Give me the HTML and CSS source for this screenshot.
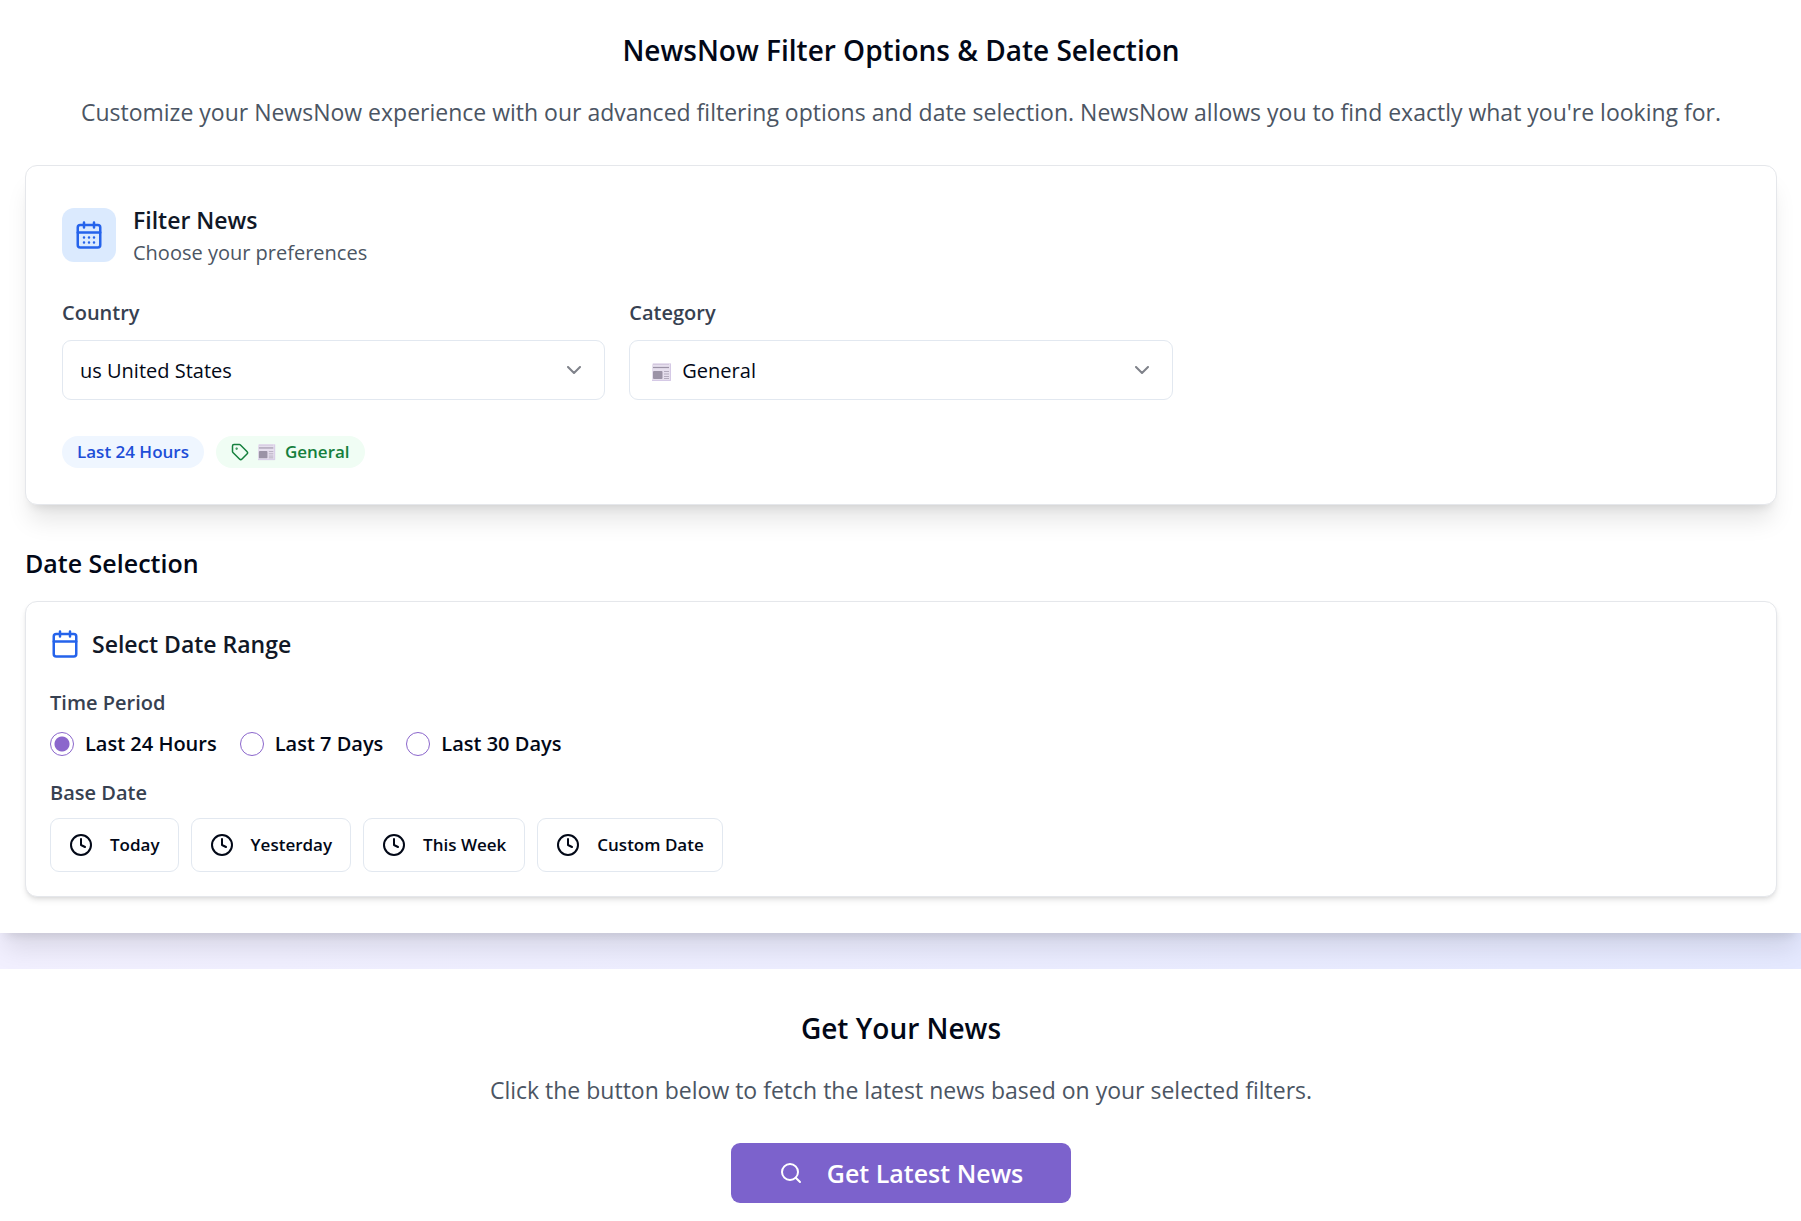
FILE: index.html
```html
<!DOCTYPE html>
<html lang="en">
<head>
    <meta charset="UTF-8">
    <meta name="viewport" content="width=device-width, initial-scale=1.0">
    <title>NewsNow</title>
    <link rel="stylesheet" href="styles.css">
</head>
<body>
    <!-- Shared icons -->
    <svg class="sprite" aria-hidden="true">
        <symbol id="newspaper" viewBox="0 0 20 20">
            <path d="M1 1h18v18H0V3z" fill="#e6dfee"/>
            <path d="M0 18.5h18.500V2" fill="none" stroke="#d5c9e6" stroke-width="1"/>
            <path d="M1 2.500h16" stroke="#d3c8de" stroke-width="1"/>
            <path d="M1 5.500h16" stroke="#9b93a6" stroke-width="1.2"/>
            <rect x="1" y="9" width="9.5" height="8" rx="1" fill="#9b93a6"/>
            <path d="M12 9.500h5M12 12h5M12 14.500h5M12 16.500h5" stroke="#b3abbd" stroke-width="1"/>
        </symbol>
        <symbol id="chevron" viewBox="0 0 24 24">
            <path d="m6 9 6 6 6-6"/>
        </symbol>
        <symbol id="clock" viewBox="0 0 24 24">
            <circle cx="12" cy="12" r="10"/>
            <path d="M12 6v6l4 2"/>
        </symbol>
    </svg>

    <main>
        <section class="panel panel-raised">
            <h2 class="panel-title">NewsNow Filter Options &amp; Date Selection</h2>
            <p class="panel-text">Customize your NewsNow experience with our advanced filtering options and date selection. NewsNow allows you to find exactly what you're looking for.</p>

            <div class="card filter-card">
                <div class="filter-header">
                    <div class="icon-box">
                        <svg class="icon icon-lg" viewBox="0 0 24 24">
                            <path d="M8 2v4M16 2v4M3 10h18"/>
                            <rect x="3" y="4" width="18" height="18" rx="2"/>
                            <path d="M8 14h.01M12 14h.01M16 14h.01M8 18h.01M12 18h.01M16 18h.01"/>
                        </svg>
                    </div>
                    <div>
                        <h3 class="card-title">Filter News</h3>
                        <p class="card-subtitle">Choose your preferences</p>
                    </div>
                </div>

                <div class="filter-grid">
                    <div class="field">
                        <label class="field-label" for="country">Country</label>
                        <div class="select-wrap">
                            <select id="country" class="select">
                                <option>us United States</option>
                            </select>
                            <svg class="icon select-chevron"><use href="#chevron"/></svg>
                        </div>
                    </div>
                    <div class="field">
                        <label class="field-label" for="category">Category</label>
                        <div class="select-wrap">
                            <select id="category" class="select select-with-icon">
                                <option>General</option>
                            </select>
                            <svg class="select-icon"><use href="#newspaper"/></svg>
                            <svg class="icon select-chevron"><use href="#chevron"/></svg>
                        </div>
                    </div>
                </div>

                <div class="chips">
                    <span class="chip chip-blue">Last 24 Hours</span>
                    <span class="chip chip-green">
                        <svg class="icon icon-sm" viewBox="0 0 24 24">
                            <path d="M12.586 2.586A2 2 0 0 0 11.172 2H4a2 2 0 0 0-2 2v7.172a2 2 0 0 0 .586 1.414l8.704 8.704a2.426 2.426 0 0 0 3.42 0l6.58-6.58a2.426 2.426 0 0 0 0-3.42z"/>
                            <circle cx="7.5" cy="7.5" r=".5" fill="currentColor"/>
                        </svg>
                        <svg class="icon-sm"><use href="#newspaper"/></svg>
                        General
                    </span>
                </div>
            </div>

            <h3 class="section-title">Date Selection</h3>

            <div class="card date-card">
                <div class="date-header">
                    <svg class="icon icon-lg" viewBox="0 0 24 24">
                        <path d="M8 2v4M16 2v4M3 10h18"/>
                        <rect x="3" y="4" width="18" height="18" rx="2"/>
                    </svg>
                    <h4 class="card-title">Select Date Range</h4>
                </div>

                <fieldset class="group">
                    <legend class="field-label">Time Period</legend>
                    <div class="radios">
                        <label class="radio"><input type="radio" name="period" checked>Last 24 Hours</label>
                        <label class="radio"><input type="radio" name="period">Last 7 Days</label>
                        <label class="radio"><input type="radio" name="period">Last 30 Days</label>
                    </div>
                </fieldset>

                <fieldset class="group">
                    <legend class="field-label">Base Date</legend>
                    <div class="date-buttons">
                        <button type="button" class="date-btn"><svg class="icon icon-md"><use href="#clock"/></svg>Today</button>
                        <button type="button" class="date-btn"><svg class="icon icon-md"><use href="#clock"/></svg>Yesterday</button>
                        <button type="button" class="date-btn"><svg class="icon icon-md"><use href="#clock"/></svg>This Week</button>
                        <button type="button" class="date-btn"><svg class="icon icon-md"><use href="#clock"/></svg>Custom Date</button>
                    </div>
                </fieldset>
            </div>
        </section>

        <section class="panel panel-fetch">
            <h2 class="panel-title">Get Your News</h2>
            <p class="panel-text">Click the button below to fetch the latest news based on your selected filters.</p>
            <button type="button" class="fetch-btn">
                <svg class="icon icon-md" viewBox="0 0 24 24">
                    <circle cx="11" cy="11" r="8"/>
                    <path d="m21 21-4.3-4.3"/>
                </svg>
                Get Latest News
            </button>
        </section>
    </main>
</body>
</html>
```
FILE: styles.css
```css
* {
    margin: 0;
    padding: 0;
    box-sizing: border-box;
}

body {
    font-family: "Segoe UI", "Open Sans", "Noto Sans", sans-serif;
    font-size: 20px;
    line-height: 30px;
    color: #020817;
    background: linear-gradient(to right, #f2f0ff, #e5e9ff);
}

button,
select {
    font: inherit;
    color: inherit;
}

main {
    display: flex;
    flex-direction: column;
    gap: 36px;
}

/* Icons */
.sprite {
    display: none;
}

.icon {
    fill: none;
    stroke: currentColor;
    stroke-width: 2;
    stroke-linecap: round;
    stroke-linejoin: round;
}

.icon-sm,
.icon-md,
.icon-lg {
    flex-shrink: 0;
}

.icon-sm {
    width: 18px;
    height: 18px;
}

.icon-md {
    width: 24px;
    height: 24px;
}

.icon-lg {
    width: 30px;
    height: 30px;
}

/* Panels */
.panel {
    background: #fff;
    padding: 30px 24px 36px 25px;
}

.panel-raised {
    box-shadow: 0 20px 25px -5px rgba(0, 0, 0, 0.1), 0 8px 10px -6px rgba(0, 0, 0, 0.1);
}

.panel-fetch {
    padding-top: 39px;
}

.panel-title {
    font-size: 28px;
    font-weight: 600;
    line-height: 40px;
    text-align: center;
    margin-bottom: 24px;
}

.panel-text {
    font-size: 23px;
    line-height: 36px;
    color: #4b5563;
    text-align: center;
    margin-bottom: 35px;
}

.section-title {
    font-size: 25px;
    font-weight: 600;
    line-height: 36px;
    margin: 40px 0 20px;
}

/* Cards */
.card {
    background: #fff;
    border: 1px solid #e5e7eb;
    border-radius: 12px;
}

.filter-card {
    padding: 36px;
    box-shadow: 0 20px 25px -5px rgba(0, 0, 0, 0.1), 0 8px 10px -6px rgba(0, 0, 0, 0.1);
}

.date-card {
    padding: 24px;
    box-shadow: 0 4px 6px -1px rgba(0, 0, 0, 0.1), 0 2px 4px -2px rgba(0, 0, 0, 0.1);
}

.card-title {
    font-size: 23px;
    font-weight: 600;
    line-height: 36px;
    color: #111827;
}

.card-subtitle {
    color: #4b5563;
}

.filter-header {
    display: flex;
    align-items: center;
    gap: 17px;
    margin-bottom: 30px;
}

.icon-box {
    display: flex;
    padding: 12px;
    border-radius: 12px;
    color: #2563eb;
    background: #dbeafe;
}

/* Filters */
.filter-grid {
    display: grid;
    grid-template-columns: repeat(3, 1fr);
    gap: 24px;
}

.field-label {
    display: block;
    font-weight: 600;
    color: #374151;
}

.field .field-label {
    margin-bottom: 12px;
}

.select-wrap {
    position: relative;
}

.select {
    display: block;
    width: 100%;
    height: 60px;
    padding: 2px 48px 0 17px;
    appearance: none;
    background: #fff;
    border: 1px solid #e2e8f0;
    border-radius: 9px;
}

.select-with-icon {
    padding-left: 52px;
}

.select-icon {
    position: absolute;
    top: 22px;
    left: 23px;
    width: 20px;
    height: 20px;
    pointer-events: none;
}

.select-chevron {
    position: absolute;
    top: 18px;
    right: 19px;
    width: 24px;
    height: 24px;
    opacity: 0.5;
    pointer-events: none;
}

.chips {
    display: flex;
    gap: 12px;
    margin-top: 36px;
}

.chip {
    display: flex;
    align-items: center;
    gap: 9px;
    height: 32px;
    padding: 0 15px;
    border-radius: 16px;
    font-size: 17px;
    font-weight: 600;
}

.chip-blue {
    color: #1d4ed8;
    background: #eff6ff;
}

.chip-green {
    color: #15803d;
    background: #f0fdf4;
}

/* Date range */
.date-header {
    display: flex;
    align-items: center;
    gap: 12px;
    margin-bottom: 26px;
}

.date-header .icon {
    color: #2563eb;
}

.group {
    border: none;
}

.group + .group {
    margin-top: 22px;
}

.radios {
    display: flex;
    flex-wrap: wrap;
    gap: 23px;
    margin-top: 14px;
}

.radio {
    display: flex;
    align-items: center;
    gap: 11px;
    font-weight: 600;
    line-height: 24px;
}

.radio input {
    width: 24px;
    height: 24px;
    appearance: none;
    border: 1px solid #8b66cc;
    border-radius: 50%;
}

.radio input:checked {
    background: radial-gradient(circle, #8b66cc 7px, transparent 8px);
}

.date-buttons {
    display: flex;
    flex-wrap: wrap;
    gap: 12px;
    margin-top: 10px;
}

.date-btn {
    display: flex;
    align-items: center;
    gap: 17px;
    height: 54px;
    padding: 0 18px;
    font-size: 17px;
    font-weight: 600;
    background: #fff;
    border: 1px solid #e2e8f0;
    border-radius: 9px;
    cursor: pointer;
}

.fetch-btn {
    display: flex;
    align-items: center;
    gap: 24px;
    height: 60px;
    margin: 0 auto;
    padding: 0 48px;
    font-size: 25px;
    font-weight: 600;
    color: #fff;
    background: #7c62cc;
    border: none;
    border-radius: 9px;
    cursor: pointer;
}
```
